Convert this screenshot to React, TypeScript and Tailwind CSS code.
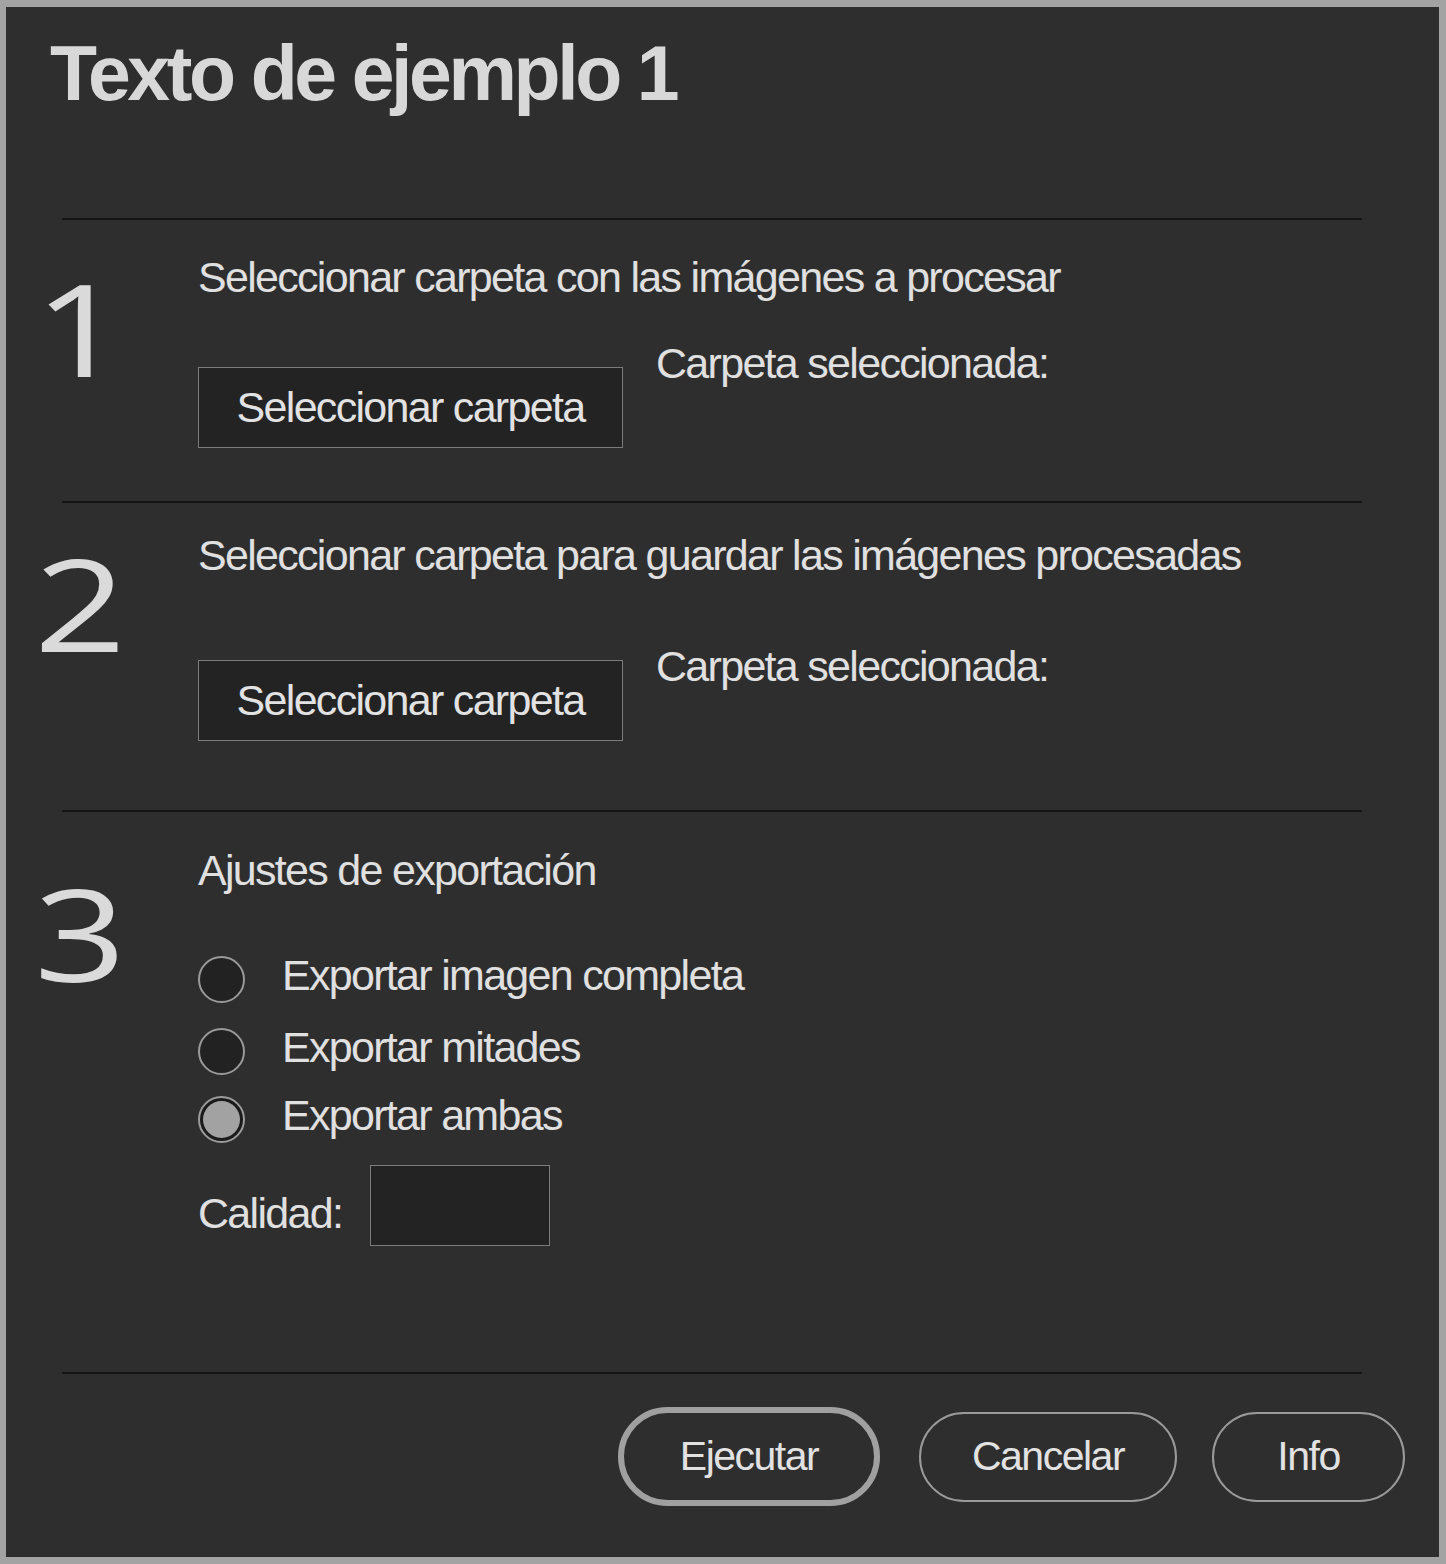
import React from 'react';

const sans = "font-['Liberation_Sans',Arial,sans-serif]";

const Divider = () => <div className="ml-[56px] h-[2px] w-[1300px] bg-[#141414]" />;

const StepNumber = ({ n, top }: { n: string; top: string }) => (
  <div className={`w-[192px] shrink-0 pl-[28px] ${top}`}>
    <span className="block origin-left scale-x-[1.25] font-['Open_Sans',sans-serif] text-[129px] font-normal leading-none text-[#dadada]">
      {n}
    </span>
  </div>
);

const FolderButton = () => (
  <button className="flex h-[81px] w-[425px] shrink-0 items-center justify-center border border-[#7c7c7c] bg-[#232323] text-[43px] leading-none tracking-[-1.7px] text-[#e2e2e2]">
    Seleccionar carpeta
  </button>
);

const Radio = ({ label, checked }: { label: string; checked?: boolean }) => (
  <label className="flex items-start gap-[37px]">
    {checked ? (
      <span className="flex h-[47px] w-[47px] shrink-0 items-center justify-center rounded-full border-2 border-[#9c9c9c] bg-[#1b1b1b]">
        <span className="h-[37px] w-[37px] rounded-full bg-[#a2a2a2]" />
      </span>
    ) : (
      <span className="h-[47px] w-[47px] shrink-0 rounded-full border-2 border-[#9a9a9a] bg-[#222222]" />
    )}
    <span className="-mt-[2px] text-[43px] leading-none tracking-[-1.7px] text-[#e0e0e0]">{label}</span>
  </label>
);

export default function App() {
  return (
    <div className={`${sans} h-[1564px] w-[1446px] border-b-[7px] border-l-[6px] border-r-[7px] border-t-[7px] border-[#a3a3a3] bg-[#2e2e2e]`}>
      {/* Title */}
      <h1 className="pl-[44px] pt-[28px] text-[77px] font-bold leading-none tracking-[-3.4px] text-[#d8d8d8]">
        Texto de ejemplo 1
      </h1>
      <div className="mt-[106px]">
        <Divider />
      </div>

      {/* Step 1 */}
      <section className="flex">
        <StepNumber n="1" top="mt-[43px]" />
        <div className="flex flex-col">
          <p className="mt-[36px] text-[43px] leading-none tracking-[-1.7px] text-[#e0e0e0]">
            Seleccionar carpeta con las imágenes a procesar
          </p>
          <div className="mt-[43px] flex items-start gap-[33px]">
            <div className="mt-[25px]">
              <FolderButton />
            </div>
            <p className="text-[43px] leading-none tracking-[-1.7px] text-[#e0e0e0]">Carpeta seleccionada:</p>
          </div>
        </div>
      </section>
      <div className="mt-[53px]">
        <Divider />
      </div>

      {/* Step 2 */}
      <section className="flex">
        <StepNumber n="2" top="mt-[35px]" />
        <div className="flex flex-col">
          <p className="mt-[31px] text-[43px] leading-none tracking-[-1.7px] text-[#e0e0e0]">
            Seleccionar carpeta para guardar las imágenes procesadas
          </p>
          <div className="mt-[68px] flex items-start gap-[33px]">
            <div className="mt-[15px]">
              <FolderButton />
            </div>
            <p className="text-[43px] leading-none tracking-[-1.7px] text-[#e0e0e0]">Carpeta seleccionada:</p>
          </div>
        </div>
      </section>
      <div className="mt-[69px]">
        <Divider />
      </div>

      {/* Step 3 */}
      <section className="flex">
        <StepNumber n="3" top="mt-[56px]" />
        <div className="flex flex-col">
          <p className="mt-[37px] text-[43px] leading-none tracking-[-1.7px] text-[#e0e0e0]">
            Ajustes de exportación
          </p>
          <div className="mt-[64px] flex flex-col">
            <Radio label="Exportar imagen completa" />
            <div className="mt-[25px]">
              <Radio label="Exportar mitades" />
            </div>
            <div className="mt-[21px]">
              <Radio label="Exportar ambas" checked />
            </div>
          </div>
          <div className="mt-[22px] flex items-start gap-[28px]">
            <span className="mt-[27px] text-[43px] leading-none tracking-[-1.7px] text-[#e0e0e0]">Calidad:</span>
            <input className="h-[81px] w-[180px] border border-[#7c7c7c] bg-[#232323] outline-none" />
          </div>
        </div>
      </section>
      <div className="mt-[126px]">
        <Divider />
      </div>

      {/* Footer buttons */}
      <div className="mt-[33px] flex items-center justify-end pr-[34px]">
        <button className="flex h-[99px] w-[262px] items-center justify-center rounded-full border-[6px] border-[#a0a0a0] text-[41px] leading-none tracking-[-1.5px] text-[#e2e2e2]">
          Ejecutar
        </button>
        <button className="ml-[39px] flex h-[90px] w-[258px] items-center justify-center rounded-full border-2 border-[#9a9a9a] text-[41px] leading-none tracking-[-1.5px] text-[#e2e2e2]">
          Cancelar
        </button>
        <button className="ml-[35px] flex h-[90px] w-[193px] items-center justify-center rounded-full border-2 border-[#9a9a9a] text-[41px] leading-none tracking-[-1.5px] text-[#e2e2e2]">
          Info
        </button>
      </div>
    </div>
  );
}
